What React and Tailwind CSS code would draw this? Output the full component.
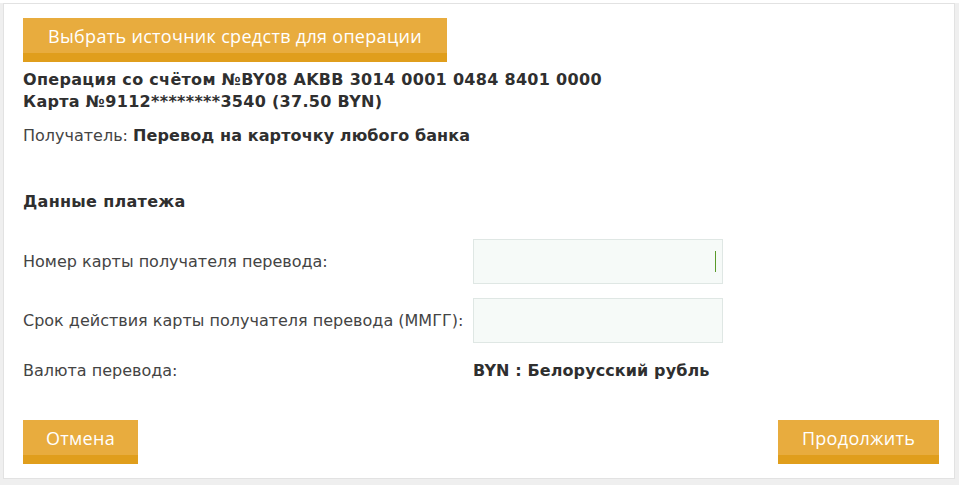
export default function App() {
  const btn =
    "relative h-[44px] bg-[#e8ac3e] text-white text-[18px] tracking-[0.3px] font-['Open_Sans',sans-serif] shadow-[inset_0_-9px_0_#e09e1c] pb-[7px] flex items-center justify-center";
  const bold = "font-bold text-[16px] tracking-[0.3px] text-[#2f2f2f]";
  return (
    <div className="w-[959px] h-[485px] bg-[#efefef] font-['DejaVu_Sans',sans-serif] text-[16px] text-[#333]">
      <div className="ml-[3px] mt-[3px] w-[952px] h-[476px] bg-white border border-[#e2e2e2] px-[19px] pt-[14px]">
        <button className={btn + " w-[424px]"}>Выбрать источник средств для операции</button>
        <div className={"mt-[7px] leading-[22px] " + bold}>
          <div>Операция со счётом №BY08 AKBB 3014 0001 0484 8401 0000</div>
          <div>Карта №9112********3540 (37.50 BYN)</div>
        </div>
        <div className="mt-[12px] leading-[22px] text-[#444]">
          Получатель: <span className="font-bold text-[16px] tracking-[0.1px] text-[#2f2f2f]">Перевод на карточку любого банка</span>
        </div>
        <div className={"mt-[44px] leading-[22px] " + bold}>Данные платежа</div>
        <div className="mt-[26px] grid grid-cols-[450px_250px] gap-y-[14px] items-center text-[#444]">
          <div>Номер карты получателя перевода:</div>
          <div className="relative h-[45px] bg-[#f6faf8] border border-[#dfe7e4]">
            <div className="absolute right-[6px] top-[11px] w-px h-[21px] bg-[#5a9a2a]" />
          </div>
          <div>Срок действия карты получателя перевода (ММГГ):</div>
          <div className="h-[45px] bg-[#f6faf8] border border-[#dfe7e4]" />
          <div className="mt-[2px]">Валюта перевода:</div>
          <div className="mt-[2px] font-bold text-[16px] tracking-[0.1px] text-[#2f2f2f]">BYN : Белорусский рубль</div>
        </div>
        <div className="mt-[37px] flex justify-between">
          <button className={btn + " w-[115px]"}>Отмена</button>
          <button className={btn + " w-[161px] mr-[-4px]"}>Продолжить</button>
        </div>
      </div>
    </div>
  );
}
